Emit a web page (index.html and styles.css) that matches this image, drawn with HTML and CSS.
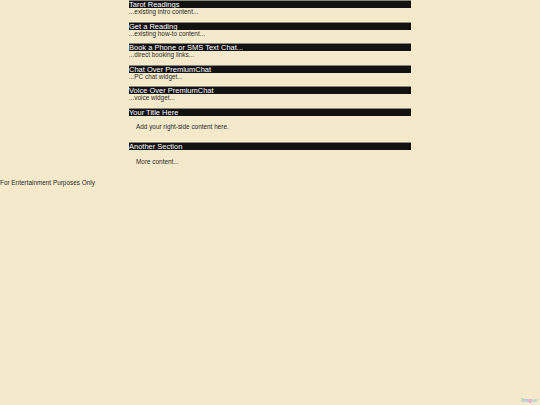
FILE: index.html
```html
<!DOCTYPE html>
<html>
<head>
<meta charset="utf-8">
<link rel="stylesheet" href="styles.css">
</head>
<body>
<div class="main">
  <section class="sec">
    <h2 class="bar">Tarot Readings</h2>
    <p class="sub">...existing intro content...</p>
  </section>
  <section class="sec">
    <h2 class="bar">Get a Reading</h2>
    <p class="sub">...existing how-to content...</p>
  </section>
  <section class="sec">
    <h2 class="bar">Book a Phone or SMS Text Chat...</h2>
    <p class="sub">...direct booking links...</p>
  </section>
  <section class="sec">
    <h2 class="bar">Chat Over PremiumChat</h2>
    <p class="sub">...PC chat widget...</p>
  </section>
  <section class="sec">
    <h2 class="bar">Voice Over PremiumChat</h2>
    <p class="sub">...voice widget...</p>
  </section>
  <section class="sec box">
    <h2 class="bar">Your Title Here</h2>
    <p class="body">Add your right-side content here.</p>
  </section>
  <section class="sec box">
    <h2 class="bar">Another Section</h2>
    <p class="body">More content...</p>
  </section>
</div>
<p class="foot">For Entertainment Purposes Only</p>
<div class="mark"><span class="m1">I</span><span class="m2">m</span><span class="m3">g</span><span class="m4">u</span><span class="m5">r</span></div>
</body>
</html>
```
FILE: styles.css
```css
html, body {
  margin: 0;
  padding: 0;
  background: #f4e9cb;
  height: 100%;
}
body {
  font-family: "Liberation Sans", Arial, sans-serif;
  color: #222;
  position: relative;
}
.main {
  margin-left: 129px;
  width: 282px;
  display: flex;
  flex-direction: column;
  gap: 6.5px;
}
.sec {
  margin: 0;
}
.bar {
  margin: 0;
  background: #121212;
  color: #fff;
  font-size: 7.5px;
  line-height: 8px;
  height: 7px;
  overflow: hidden;
  font-weight: normal;
  border-top: 1px solid #8a8678;
}
.sub {
  margin: 0;
  font-size: 6.4px;
  line-height: 7px;
  color: #2a2a2a;
}
.body {
  margin: 0;
  padding: 7.5px 7px 5.5px;
  font-size: 6.4px;
  line-height: 7px;
  color: #2a2a2a;
}
.foot {
  margin: 8.5px 0 0;
  font-size: 6.4px;
  line-height: 7px;
  color: #2a2a2a;
}
.mark {
  position: absolute;
  right: 2px;
  bottom: 2px;
  font-size: 6px;
  line-height: 6px;
  font-weight: bold;
}
.m1 { color: #7fcf88; }
.m2 { color: #9fb9e8; }
.m3 { color: #e08fc6; }
.m4 { color: #8fcbe0; }
.m5 { color: #b6dc8f; }
```
